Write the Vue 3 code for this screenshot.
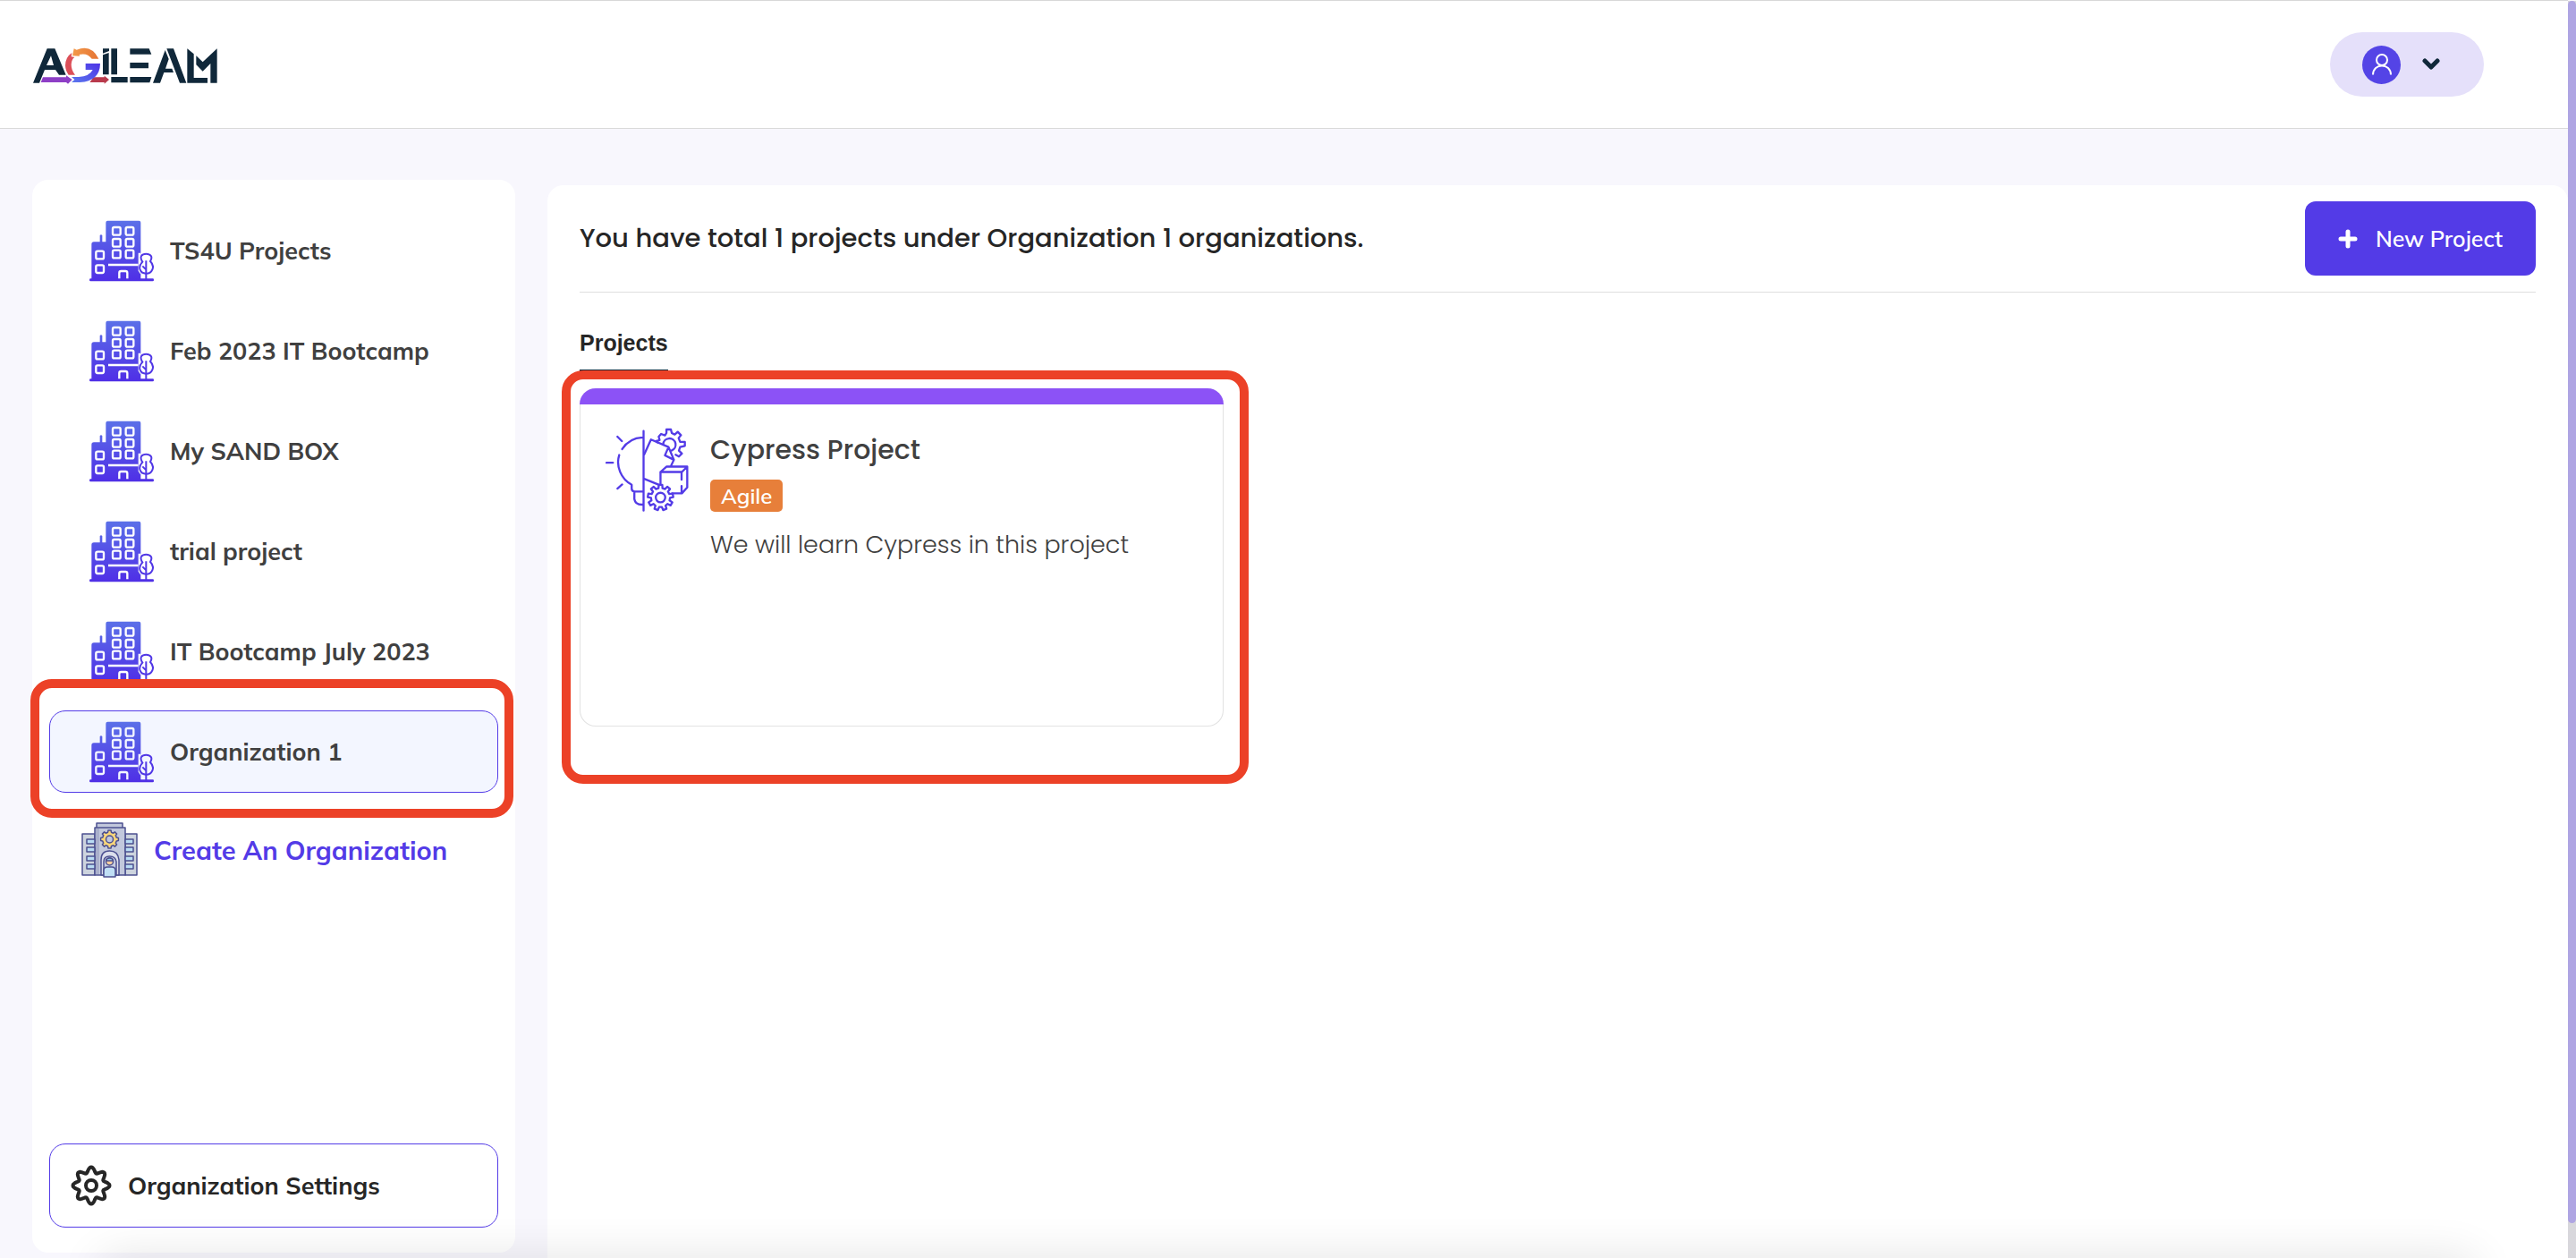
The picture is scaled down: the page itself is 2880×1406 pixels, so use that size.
<script setup>
import { ref } from 'vue'

const organizations = ref([
  'TS4U Projects',
  'Feb 2023 IT Bootcamp',
  'My SAND BOX',
  'trial project',
  'IT Bootcamp July 2023',
  'Organization 1',
])
const selected = ref('Organization 1')

const windows = [
  [138, 104], [182, 104], [138, 143], [182, 143], [138, 181], [182, 181],
  [82, 184], [82, 231],
]

// Toothed wheel outline: flat teeth joined by flat valleys.
function cog(cx, cy, outer, inner, teeth) {
  const step = (Math.PI * 2) / teeth
  const points = []
  for (let i = 0; i < teeth; i++) {
    const a = i * step - Math.PI / 2
    for (const [offset, r] of [[-0.3, inner], [-0.2, outer], [0.2, outer], [0.3, inner]]) {
      const t = a + offset * step
      points.push((cx + r * Math.cos(t)).toFixed(1) + ' ' + (cy + r * Math.sin(t)).toFixed(1))
    }
  }
  return 'M' + points.join('L') + 'Z'
}

// Soft eight-lobed wheel for the settings button.
function softCog(c, mean, swing) {
  const points = []
  for (let d = 0; d < 360; d += 3) {
    const t = (d * Math.PI) / 180
    const r = mean + swing * Math.cos(8 * t)
    points.push((c + r * Math.cos(t)).toFixed(1) + ' ' + (c + r * Math.sin(t)).toFixed(1))
  }
  return 'M' + points.join('L') + 'Z'
}
</script>

<template>
  <div class="page">
    <header class="topbar">
      <a href="#" class="brand" aria-label="Agileam home">
        <svg viewBox="108 156 624 129" width="208" height="43" aria-hidden="true">
          <defs>
            <linearGradient id="brand-blue" x1="0" y1="1" x2="1" y2="0">
              <stop offset="0" stop-color="#5b78ee" />
              <stop offset="1" stop-color="#4d33e6" />
            </linearGradient>
            <linearGradient id="brand-orange">
              <stop offset="0" stop-color="#f39a49" />
              <stop offset="1" stop-color="#e57434" />
            </linearGradient>
          </defs>
          <g fill="#10283a">
            <path d="M111 278 158 163H184L221 251H198L186 234H150L132 278ZM156 219H180L171 187Z" />
            <path d="M345 184 365 177V250H345ZM345 163H366V171L345 179Z" />
            <path d="M373 163H393V250H373ZM373 258H428V277H373Z" />
            <path d="M436 163H500L508 182H436ZM436 210H498V229H436ZM436 258H508L502 277H436Z" />
            <path d="M513 278 554 168 566 198 555 230H577L582 243H550L537 278ZM559 163H582L625 278H603Z" />
            <path d="M628 163 650 181V261H696V278H628ZM658 187 680 208 728 163V278H706V213L680 239 658 217Z" />
          </g>
          <path fill="#8e3fc6" d="M144 259H222V253L242 267 228 281 222 276H137Z" />
          <path fill="#dc4f58" d="M241 177Q219 192 219 220 220 238 230 251H252Q239 236 239 216 240 199 250 192L239 190Z" />
          <path fill="url(#brand-orange)" d="M248 163 257 167Q306 147 331 197H308Q292 176 266 183L267 188 243 187Z" />
          <path fill="#b93a4c" d="M314 259H350V254L366 267 350 281V276H301Z" />
          <path fill="url(#brand-blue)" d="M287 213H336Q335 272 268 276H240L250 267 240 258H264Q300 256 311 234H287Z" />
        </svg>
      </a>
      <button type="button" class="account" aria-label="Account menu">
        <span class="avatar">
          <svg viewBox="0 0 24 24" width="24" height="24" fill="none" stroke="#fff" stroke-width="2" aria-hidden="true">
            <circle cx="12" cy="7" r="6" />
            <path d="M2 23.500C2 10 22 10 22 23.500" />
          </svg>
        </span>
        <svg viewBox="0 0 20 14" width="20" height="14" fill="none" stroke="#10283a" stroke-width="5" stroke-linecap="round" stroke-linejoin="round" aria-hidden="true">
          <path d="M3 3 10 10 17 3" />
        </svg>
      </button>
    </header>

    <div class="columns">
      <nav class="sidebar" aria-label="Organizations">
        <svg class="defs" width="0" height="0" aria-hidden="true">
          <defs>
            <linearGradient id="tower" gradientUnits="userSpaceOnUse" x1="0" y1="82" x2="0" y2="284">
              <stop offset="0" stop-color="#5b70e8" />
              <stop offset="1" stop-color="#4f2fe6" />
            </linearGradient>
          </defs>
        </svg>
        <ul class="org-list">
          <li v-for="name in organizations" :key="name">
            <button type="button" class="org" :class="{ active: name === selected }" @click="selected = name">
              <svg class="tower" viewBox="60 80 216 207" width="72" height="69" aria-hidden="true">
                <g fill="url(#tower)">
                  <path d="M115 88Q115 82 121 82H226Q232 82 232 88V280H67V161Q67 153 75 153H95V131Q99 126 103 131V153H115Z" />
                  <rect x="60" y="276" width="216" height="9" rx="4" />
                </g>
                <g fill="none" stroke="currentColor" stroke-width="7">
                  <rect v-for="[x, y] in windows" :key="x + '-' + y" :x="x" :y="y" width="26" height="26" rx="5" />
                  <path d="M160 276V257Q160 251 166 251H181Q187 251 187 257V276" />
                </g>
                <path fill="currentColor" d="M123 226H225V234H123ZM232 190H224V250L232 262Z" />
                <path fill="currentColor" stroke="#5138e6" stroke-width="6" d="M238 220C226 202 236 193 250 193S274 202 264 218C282 236 270 259 250 259S220 238 238 220Z" />
                <path fill="none" stroke="#5138e6" stroke-width="6" d="M250 216V278M250 246 238 234" />
              </svg>
              <span>{{ name }}</span>
              <i v-if="name === 'Organization 1'" class="marker org-marker" aria-hidden="true"></i>
            </button>
          </li>
        </ul>
        <a href="#" class="create">
          <svg viewBox="0 0 63 63" width="63" height="63" stroke="#4c5090" stroke-width="1.500" stroke-linejoin="round" aria-hidden="true">
            <path fill="#cdd4de" d="M1 13H15V59H1ZM49 13H62V59H49Z" />
            <path fill="#c2c8dc" d="M15 6H49V59H15ZM17 1H46V6H17Z" />
            <path fill="#a9afcb" stroke="none" d="M16 7H20V58H16Z" />
            <path fill="#b9dcf4" d="M6 19H15V24H6ZM6 28H15V33H6ZM6 38H15V43H6ZM6 47H15V52H6ZM49 19H58V24H49ZM49 28H58V33H49ZM49 38H58V43H49ZM49 47H58V52H49Z" />
            <path fill="#f9d67a" :d="cog(31.5, 19, 10, 8, 8)" />
            <circle cx="31.500" cy="19" r="4" fill="#c2c8dc" />
            <path fill="#dcdfec" d="M22 59V42Q22 32 31.500 32T42 42V59Z" />
            <path fill="#c8cde0" d="M25 59V44Q25 38 31.500 38T39 44V59Z" />
            <circle cx="31.500" cy="44" r="4" fill="#f6cfa0" />
            <path fill="#9ad0e8" d="M27.500 43Q28 40 31.500 40T35.500 43Z" />
            <path fill="#c0dff5" d="M25 61V54Q25 50 29 50H34Q38 50 38 54V61Z" />
          </svg>
          <span>Create An Organization</span>
        </a>
        <button type="button" class="settings">
          <svg viewBox="0 0 46 46" width="46" height="46" fill="none" stroke="#262626" stroke-width="4" stroke-linejoin="round" aria-hidden="true">
            <path :d="softCog(23, 17.5, 3)" />
            <circle cx="23" cy="23" r="6" />
          </svg>
          <span>Organization Settings</span>
        </button>
      </nav>

      <main class="content">
        <div class="content-head">
          <h1>You have total 1 projects under Organization 1 organizations.</h1>
          <button type="button" class="new-project">
            <svg viewBox="0 0 22 22" width="22" height="22" fill="none" stroke="#fff" stroke-width="5" stroke-linecap="round" aria-hidden="true">
              <path d="M11 3V19M3 11H19" />
            </svg>
            <span>New Project</span>
          </button>
        </div>
        <h2 class="tab">Projects</h2>
        <article class="card">
          <div class="card-body">
            <svg viewBox="170 235 280 283" width="93" height="94" fill="none" stroke="#533be7" stroke-width="7" stroke-linecap="round" stroke-linejoin="round" aria-hidden="true">
              <path d="M298 246V514M295 268Q250 270 226 307M216 327C204 364 222 408 258 427V440Q258 450 268 450H296M267 451V475Q270 494 292 494H296" />
              <path d="M210 265 225 280M173 353H195M210 440 226 426" />
              <path d="M300 325 323 275 382 300 370 328 400 343 391 362M382 300 400 343M300 407 352 428" />
              <path d="M342 280 352 277 349 265 357 256 370 261 375 253V241H390L393 253 403 258 413 249 424 260 416 270 421 283H437V296L421 300 417 312 427 322 417 332 406 326" />
              <path d="M341 280 346 285M364 291A21 21 0 1 1 392 312" />
              <path d="M355 424V384H426V410M355 384 375 366H445L427 384M445 366V436L427 456H394M426 431V454" />
              <path :d="cog(355, 470, 43, 32, 9)" />
              <circle cx="355" cy="470" r="16" />
            </svg>
            <div class="card-text">
              <h3>Cypress Project</h3>
              <span class="badge">Agile</span>
              <p>We will learn Cypress in this project</p>
            </div>
          </div>
          <i class="marker card-marker" aria-hidden="true"></i>
        </article>
      </main>
    </div>

    <div class="scroll-track" aria-hidden="true"><div class="scroll-thumb"></div></div>
    <div class="edge-shade" aria-hidden="true"></div>
  </div>
</template>

<style>
body {
  margin: 0;
  background: #f8f7fd;
}
</style>

<style scoped>
.page {
  --violet: #533be7;
  --sans: Mulish, 'Open Sans', sans-serif;
  --round: Poppins, Inter, sans-serif;
  display: flex;
  flex-direction: column;
  box-sizing: border-box;
  min-height: 100vh;
  padding-right: 9px;
  font-family: var(--sans);
  color: #404040;
  background: #f8f7fd;
}
*,
*::before {
  box-sizing: border-box;
}
svg {
  flex: none;
  display: block;
}
button {
  margin: 0;
  font-family: inherit;
  color: inherit;
  cursor: pointer;
}
a {
  text-decoration: none;
}

.topbar {
  display: flex;
  align-items: center;
  justify-content: space-between;
  height: 144px;
  padding: 0 94px 0 36px;
  background: #fff;
  border-top: 1px solid #d8d8d8;
  border-bottom: 1px solid #d9d9d9;
}
.brand {
  padding-top: 3px;
}
.account {
  display: flex;
  align-items: center;
  gap: 24px;
  width: 172px;
  height: 72px;
  padding: 0 36px;
  border: 0;
  border-radius: 36px;
  background: #e5e0fa;
}
.avatar {
  display: grid;
  place-items: center;
  width: 43px;
  height: 43px;
  border-radius: 50%;
  background: #5444e6;
}

.columns {
  display: flex;
  flex: 1;
  gap: 36px;
  padding-left: 36px;
}
.sidebar {
  display: flex;
  flex-direction: column;
  width: 540px;
  margin: 57px 0 6px;
  padding: 33px 19px 28px;
  border-radius: 18px;
  background: #fff;
}
.defs {
  position: absolute;
}
.org-list {
  display: flex;
  flex-direction: column;
  gap: 20px;
  margin: 0;
  padding: 0;
  list-style: none;
}
.org,
.settings {
  position: relative;
  display: flex;
  align-items: center;
  gap: 18px;
  width: 100%;
  height: 92px;
  padding: 0 0 0 44px;
  border: 1px solid transparent;
  border-radius: 18px;
  background: transparent;
  font-size: 27px;
  font-weight: 700;
  text-align: left;
}
.org.active {
  border-color: var(--violet);
  background: #f3f6ff;
}
.tower {
  color: #fff;
}
.active .tower {
  color: #f3f6ff;
}
.create {
  display: flex;
  align-items: center;
  gap: 18px;
  height: 92px;
  margin-top: 18px;
  padding-left: 36px;
  font-size: 29px;
  font-weight: 700;
  color: var(--violet);
}
.settings {
  height: 94px;
  margin-top: auto;
  padding-left: 23px;
  border-color: var(--violet);
  color: #262626;
}

.content {
  flex: 1;
  min-width: 0;
  margin-top: 63px;
  padding: 18px 36px;
  border-radius: 18px 18px 0 0;
  background: #fff;
}
.content-head {
  display: flex;
  align-items: center;
  justify-content: space-between;
  padding-bottom: 18px;
  border-bottom: 1px solid #dfdfdf;
}
h1,
h2,
h3,
p {
  margin: 0;
}
h1 {
  font-family: var(--round);
  font-size: 29px;
  font-weight: 500;
  color: #262626;
}
.new-project {
  display: flex;
  align-items: center;
  justify-content: center;
  gap: 20px;
  width: 258px;
  height: 83px;
  padding: 0;
  border: 0;
  border-radius: 12px;
  background: var(--violet);
  font-size: 25px;
  font-weight: 600;
  color: #fff;
}
.tab {
  width: fit-content;
  margin-top: 41px;
  padding-bottom: 15px;
  border-bottom: 2px solid #10283a;
  font: 700 25px/30px 'Liberation Sans', Arial, sans-serif;
  color: #262626;
}
.card {
  position: relative;
  width: 720px;
  height: 378px;
  margin-top: 19px;
  border: 1px solid #e2e2e2;
  border-top: 0;
  border-radius: 18px;
  background: #fff;
}
.card::before {
  content: '';
  display: block;
  height: 18px;
  margin: 0 -1px;
  border-radius: 18px 18px 0 0;
  background: #8c52f6;
}
.card-body {
  display: flex;
  gap: 24px;
  padding: 26px 28px;
}
h3 {
  font-family: var(--round);
  font-size: 30px;
  font-weight: 500;
  line-height: 50px;
}
.badge {
  display: block;
  width: fit-content;
  margin: 8px 0 17px;
  padding: 0 12px;
  border-radius: 5px;
  background: #e77f3a;
  font-size: 24px;
  font-weight: 600;
  line-height: 36px;
  color: #fff;
}
p {
  font-family: var(--round);
  font-size: 27px;
  font-weight: 300;
  line-height: 40px;
}

.marker {
  position: absolute;
  z-index: 1;
  border: 10px solid #ec4127;
  border-radius: 24px;
  pointer-events: none;
}
.org-marker {
  inset: -36px -18px -29px -22px;
}
.card-marker {
  inset: -20px -29px -65px -21px;
}
.scroll-track {
  position: fixed;
  inset: 1px 0 0 auto;
  width: 9px;
  background: #d8d7dc;
}
.scroll-thumb {
  height: calc(100% - 39px);
  border-radius: 5px;
  background: #afa5e3;
}
.edge-shade {
  position: fixed;
  top: 100%;
  left: 110px;
  right: 110px;
  height: 40px;
  border-radius: 20px;
  box-shadow: 0 0 50px rgba(0, 0, 0, 0.12);
  pointer-events: none;
}
</style>
